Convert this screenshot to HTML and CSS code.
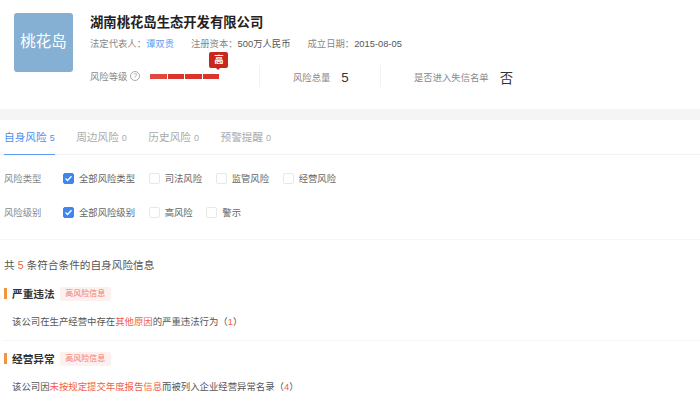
FILE: index.html
```html
<!DOCTYPE html>
<html lang="en">
<head>
  <meta charset="UTF-8">
  <title>湖南桃花岛生态开发有限公司</title>
  <link rel="stylesheet" href="styles.css">
</head>
<body>
  <header class="company">
    <div class="logo">桃花岛</div>
    <div class="info">
      <h1 class="name">湖南桃花岛生态开发有限公司</h1>
      <div class="meta">
        <span class="meta-item">法定代表人：<a class="link">谭双贵</a></span>
        <span class="meta-item">注册资本：<b>500万人民币</b></span>
        <span class="meta-item">成立日期：<b>2015-08-05</b></span>
      </div>
      <div class="risk-row">
        <div class="risk-level">
          <span class="muted">风险等级</span>
          <span class="help">?</span>
          <div class="bars">
            <span class="badge">高</span>
            <i></i><i></i><i></i><i></i>
          </div>
        </div>
        <div class="stat stat-total">
          <span class="muted">风险总量</span>
          <span class="stat-value">5</span>
        </div>
        <div class="stat stat-list">
          <span class="muted">是否进入失信名单</span>
          <span class="stat-value">否</span>
        </div>
      </div>
    </div>
  </header>

  <nav class="tabs">
    <a class="tab active">自身风险<small>5</small></a>
    <a class="tab">周边风险<small>0</small></a>
    <a class="tab">历史风险<small>0</small></a>
    <a class="tab">预警提醒<small>0</small></a>
  </nav>

  <section class="filters">
    <div class="filter-row">
      <span class="filter-label">风险类型</span>
      <label class="check on"><span class="box"><svg viewBox="0 0 11 11"><path d="M2.5 5.5l2 2 4-4.2" fill="none" stroke="#fff" stroke-width="1.4"/></svg></span>全部风险类型</label>
      <label class="check"><span class="box"></span>司法风险</label>
      <label class="check"><span class="box"></span>监管风险</label>
      <label class="check"><span class="box"></span>经营风险</label>
    </div>
    <div class="filter-row">
      <span class="filter-label">风险级别</span>
      <label class="check on"><span class="box"><svg viewBox="0 0 11 11"><path d="M2.5 5.5l2 2 4-4.2" fill="none" stroke="#fff" stroke-width="1.4"/></svg></span>全部风险级别</label>
      <label class="check"><span class="box"></span>高风险</label>
      <label class="check"><span class="box"></span>警示</label>
    </div>
  </section>

  <section class="results">
    <p class="summary">共 <em>5</em> 条符合条件的自身风险信息</p>
    <div class="group">
      <h2 class="group-title">严重违法<span class="tag">高风险信息</span></h2>
      <p class="item">该公司在生产经营中存在<em>其他原因</em>的严重违法行为（<em>1</em>）</p>
    </div>
    <div class="group">
      <h2 class="group-title">经营异常<span class="tag">高风险信息</span></h2>
      <p class="item">该公司因<em>未按规定提交年度报告信息</em>而被列入企业经营异常名录（<em>4</em>）</p>
    </div>
  </section>
</body>
</html>
```

FILE: styles.css
```css
* {
  box-sizing: border-box;
}

body {
  margin: 0;
  height: 408px;
  overflow: hidden;
  background: #fff;
  color: #333;
  font-family: "Liberation Sans", "Noto Sans CJK SC", sans-serif;
  font-size: 9.33px;
}

p, h1, h2 {
  margin: 0;
}

em {
  font-style: normal;
  color: #f25c4a;
}

.muted {
  color: #888;
}

/* company header */
.company {
  display: flex;
  height: 120px;
  padding: 13px 0 0 14px;
  border-bottom: 11px solid #f5f5f5;
}

.logo {
  width: 59px;
  height: 59px;
  margin-right: 17px;
  border-radius: 3px;
  background: #85afd3;
  color: #fff;
  font-size: 15.5px;
  line-height: 58px;
  text-align: center;
}

.name {
  height: 18px;
  margin-top: 1px;
  font-size: 13.33px;
  font-weight: bold;
  line-height: 18px;
  color: #222;
}

.meta {
  display: flex;
  gap: 17px;
  margin-top: 4px;
  line-height: 16px;
  color: #888;
}

.meta b {
  font-weight: normal;
  color: #555;
}

.link {
  color: #5b9bf0;
}

.risk-row {
  display: flex;
  align-items: center;
  height: 22px;
  margin-top: 13px;
}

.risk-level {
  display: flex;
  align-items: center;
  width: 170px;
  height: 22px;
  border-right: 1px solid #f2f2f2;
}

.help {
  width: 10px;
  height: 10px;
  margin-left: 3px;
  border: 1px solid #aaa;
  border-radius: 50%;
  color: #999;
  font-size: 7px;
  line-height: 8px;
  text-align: center;
}

.bars {
  position: relative;
  display: flex;
  gap: 1px;
  margin-left: 10px;
}

.bars i {
  width: 16.5px;
  height: 5px;
  background: #d9352c;
}

.bars i:first-of-type {
  background: #e0473f;
}

.badge {
  position: absolute;
  right: -9px;
  bottom: 11px;
  width: 19px;
  height: 16px;
  border-radius: 2px;
  background: #c9261c;
  color: #fff;
  font-size: 9.33px;
  font-weight: bold;
  line-height: 16px;
  text-align: center;
}

.badge::after {
  content: "";
  position: absolute;
  left: 7px;
  top: 16px;
  border: 2.5px solid transparent;
  border-top-color: #c9261c;
  border-bottom: 0;
}

.stat {
  display: flex;
  align-items: center;
  height: 22px;
  padding-top: 2px;
}

.stat-total {
  width: 121px;
  padding-left: 33px;
  border-right: 1px solid #f2f2f2;
}

.stat-list {
  padding-left: 33px;
}

.stat-value {
  margin-left: 11px;
  font-size: 13.33px;
  color: #333;
}

/* tabs */
.tabs {
  display: flex;
  gap: 21.5px;
  height: 35px;
  padding-left: 4px;
  border-bottom: 1px solid #f2f2f2;
}

.tab {
  height: 35px;
  font-size: 10.67px;
  line-height: 34px;
  color: #aaa;
}

.tab small {
  margin-left: 3px;
  font-size: 9px;
}

.tab.active {
  border-bottom: 1px solid #5b9bf0;
  color: #4a90ee;
}

/* filters */
.filters {
  display: flex;
  flex-direction: column;
  gap: 18px;
  height: 85px;
  padding: 15px 0 0 4px;
  border-bottom: 1px solid #f5f5f5;
}

.filter-row {
  display: flex;
  align-items: center;
  height: 16px;
}

.filter-label {
  width: 59px;
  color: #888;
}

.check {
  display: flex;
  align-items: center;
  margin-right: 13.7px;
  color: #666;
}

.box {
  flex: none;
  width: 11px;
  height: 11px;
  margin-right: 5px;
  border: 1px solid #e8e8e8;
  border-radius: 2px;
}

.box svg {
  display: block;
  width: 11px;
  height: 11px;
  margin: -1px;
}

.on .box {
  border-color: #3d86f0;
  background: #3d86f0;
}

/* results */
.results {
  padding: 17px 0 0 4px;
}

.summary {
  height: 16px;
  font-size: 10.67px;
  line-height: 16px;
  color: #555;
}

.group + .group {
  margin-top: 10px;
  padding-top: 10px;
  border-top: 1px solid #f5f5f5;
}

.summary + .group {
  margin-top: 13px;
}

.group-title {
  position: relative;
  display: flex;
  align-items: center;
  height: 16px;
  padding-left: 8px;
  font-size: 10.67px;
  line-height: 16px;
  color: #333;
}

.group-title::before {
  content: "";
  position: absolute;
  left: 0;
  top: 2px;
  width: 3px;
  height: 11px;
  background: #f2933f;
}

.tag {
  height: 14px;
  margin-left: 5px;
  padding: 0 5.5px;
  border-radius: 2px;
  background: #fdf1ef;
  color: #f4796a;
  font-size: 8px;
  font-weight: normal;
  line-height: 14px;
}

.item {
  margin-top: 12px;
  padding-left: 8px;
  font-size: 9.4px;
  line-height: 16px;
  color: #555;
}
```
